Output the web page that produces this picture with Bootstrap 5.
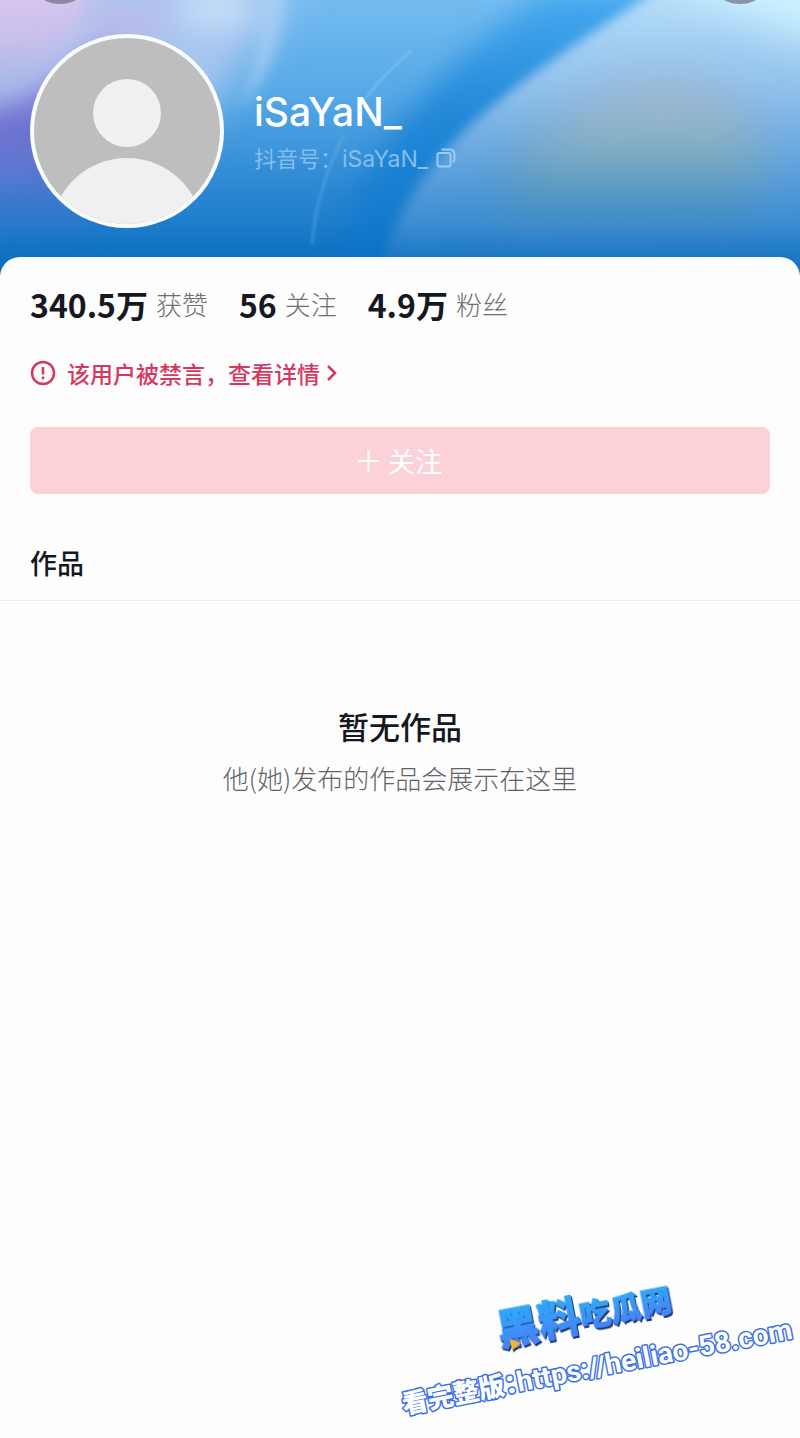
<!DOCTYPE html>
<html lang="zh-CN">
<head>
<meta charset="utf-8">
<meta name="viewport" content="width=device-width, initial-scale=1">
<title>iSaYaN_</title>
<link href="https://cdn.jsdelivr.net/npm/bootstrap@5.3.0/dist/css/bootstrap.min.css" rel="stylesheet">
<style>
  body { font-family: "Noto Sans CJK SC", sans-serif; background: #fdfdfd; color: #17181f; }
  .hero { height: 275px; padding: 34px 30px 0; background: #1678c8; }
  .hero-art { z-index: 0; }
  .hero-art filter { color-interpolation-filters: sRGB; }
  .top-actions { top: -64px; padding: 0 26px; z-index: 1; }
  .round-btn { width: 68px; height: 68px; background: rgba(110, 110, 130, .7); border: 0; }
  .profile { z-index: 1; gap: 30px; }
  .avatar { width: 194px; height: 194px; }
  .nickname { font: 500 39px/48px Inter, sans-serif; margin-top: 54px; }
  .account { font-size: 22px; line-height: 32px; color: #86bdec; margin-top: 5px; gap: 8px; }
  .account-id { font-family: Inter, "Noto Sans CJK SC", sans-serif; font-size: 23px; }
  .sheet { margin-top: -18px; border-radius: 20px 20px 0 0; background: #fdfdfd; z-index: 2; }
  .gutter { padding-left: 30px; padding-right: 30px; }
  .stats { padding-top: 27px; gap: 31px; line-height: 40px; }
  .stat { gap: 8px; }
  .stat-num { font-size: 32px; font-weight: 700; }
  .stat-label { font-size: 26px; font-weight: 300; color: #6e6f73; }
  .ban { margin-top: 33px; gap: 11px; font-size: 23px; line-height: 32px; font-weight: 500; color: #d5385f; }
  .ban:hover { color: #d5385f; }
  .ban-chevron { margin-left: -4px; }
  .follow { margin-top: 36px; height: 67px; border-radius: 8px; font-size: 27px; line-height: 32px; padding: 0; font-weight: 400; gap: 9px; }
  .follow, .follow:disabled { background: #fcd2d8; color: #fff; border: 0; opacity: 1; }
  .tab-title { margin-top: 48px; padding-bottom: 16px; font-size: 27px; line-height: 42px; font-weight: 500; border-bottom: 1px solid #ececee; }
  .empty { padding-top: 103px; }
  .empty-title { font-size: 31px; line-height: 44px; font-weight: 500; }
  .empty-text { font-size: 26px; line-height: 38px; font-weight: 300; color: #626367; margin-top: 11px; }
  .site-mark { width: 410px; height: 190px; }
  .mark-title { filter: drop-shadow(1px 2px 0 #16336e); }
</style>
</head>
<body>
<div class="d-flex flex-column min-vh-100">
  <header class="hero position-relative overflow-hidden">
    <svg class="hero-art position-absolute top-0 start-0 w-100 h-100" viewBox="0 0 800 275" preserveAspectRatio="none" aria-hidden="true">
      <defs>
        <linearGradient id="sky" x1="0" y1="0" x2="0" y2="1">
          <stop offset="0" stop-color="#74bcf0"/><stop offset=".35" stop-color="#55a8e6"/><stop offset=".7" stop-color="#2a86d2"/><stop offset="1" stop-color="#0a6fc0"/>
        </linearGradient>
        <linearGradient id="band" x1="0" y1="0" x2="0" y2="1">
          <stop offset="0" stop-color="#48aaf0"/><stop offset=".4" stop-color="#2288d8"/><stop offset="1" stop-color="#0870c4"/>
        </linearGradient>
        <linearGradient id="veil" x1="0" y1="0" x2="0" y2="1">
          <stop offset="0" stop-color="#bce2fb"/><stop offset=".35" stop-color="#90c0ec"/><stop offset=".68" stop-color="#4c96d8"/><stop offset="1" stop-color="#0f71c2"/>
        </linearGradient>
        <linearGradient id="sand" x1="0" y1="0" x2="0" y2="1">
          <stop offset="0" stop-color="#a9bcd6"/><stop offset=".4" stop-color="#86b0c4"/><stop offset=".7" stop-color="#4e94c0"/><stop offset="1" stop-color="#1b76bd" stop-opacity="0"/>
        </linearGradient>
        <linearGradient id="dusk" x1="0" y1="0" x2="0" y2="1">
          <stop offset="0" stop-color="#9a80da"/><stop offset=".5" stop-color="#6470ce"/><stop offset="1" stop-color="#2f70c8" stop-opacity="0"/>
        </linearGradient>
        <linearGradient id="bloom" x1="0" y1="0" x2="0" y2="1">
          <stop offset="0" stop-color="#ecd0f6"/><stop offset=".5" stop-color="#ccc0ec"/><stop offset="1" stop-color="#88b2e4"/>
        </linearGradient>
        <filter id="b1" x="-20%" y="-20%" width="140%" height="140%"><feGaussianBlur stdDeviation="1"/></filter>
        <filter id="b6" x="-50%" y="-50%" width="200%" height="200%"><feGaussianBlur stdDeviation="6"/></filter>
        <filter id="b14" x="-50%" y="-50%" width="200%" height="200%"><feGaussianBlur stdDeviation="14"/></filter>
        <filter id="b22" x="-60%" y="-60%" width="220%" height="220%"><feGaussianBlur stdDeviation="22"/></filter>
      </defs>
      <rect width="800" height="275" fill="url(#sky)"/>
      <path d="M-60-60H300C280 30 240 80 180 130L-60 170Z" fill="#a8c6f0" filter="url(#b22)"/>
      <path d="M-40 90L50 78 110 40 150 60 80 240-40 262Z" fill="url(#dusk)" filter="url(#b14)"/>
      <path d="M-60-60H110C95 20 60 70 25 98L-60 125Z" fill="url(#bloom)" filter="url(#b14)"/>
      <ellipse cx="125" cy="22" rx="50" ry="22" fill="#c4b8e6" opacity=".6" filter="url(#b14)"/>
      <ellipse cx="215" cy="8" rx="40" ry="24" fill="#c8e0f8" opacity=".8" filter="url(#b14)"/>
      <path d="M258-20H285C290 30 270 75 240 110 256 70 262 30 258-20Z" fill="#b8d6f6" opacity=".5" filter="url(#b6)"/>
      <path d="M720-10C560 50 480 140 440 300H340C338 240 355 180 405 120 440 75 490 30 550-10Z" fill="url(#band)" filter="url(#b14)"/>
      <path d="M670-20C600 30 505 85 450 145 410 190 385 230 376 300H840V-20Z" fill="url(#veil)" filter="url(#b6)"/>
      <path d="M485 235C490 175 545 115 610 88 680 62 745 80 765 150L750 250Z" fill="url(#sand)" filter="url(#b22)"/>
      <path d="M680-50H850V40C800 45 760 5 680-10Z" fill="#cdf3ff" filter="url(#b22)"/>
      <rect x="-20" y="250" width="840" height="50" fill="#0a6cbb" opacity=".6" filter="url(#b14)"/>
      <path d="M412 50Q382 76 366 98" fill="none" stroke="#8fc9f4" stroke-width="2" opacity=".6" filter="url(#b1)"/>
      <path d="M344 135Q316 190 312 245" fill="none" stroke="#7abaea" stroke-width="4" opacity=".25" filter="url(#b1)"/>
    </svg>
    <div class="top-actions position-absolute start-0 w-100 d-flex justify-content-between">
      <button type="button" class="round-btn rounded-circle p-0" aria-label="返回"></button>
      <button type="button" class="round-btn rounded-circle p-0" aria-label="更多"></button>
    </div>
    <div class="profile position-relative d-flex">
      <svg class="avatar flex-shrink-0" viewBox="0 0 194 194" role="img" aria-label="头像">
        <clipPath id="face"><circle cx="97" cy="97" r="93"/></clipPath>
        <circle cx="97" cy="97" r="97" fill="#fafdff"/>
        <g clip-path="url(#face)">
          <rect width="194" height="194" fill="#bebebe"/>
          <circle cx="97" cy="79" r="34" fill="#f0f0f0"/>
          <circle cx="97" cy="200" r="76" fill="#f0f0f0"/>
        </g>
      </svg>
      <div>
        <h1 class="nickname text-white mb-0">iSaYaN_</h1>
        <div class="account d-flex align-items-center">
          <span>抖音号：<span class="account-id">iSaYaN_</span></span>
          <button type="button" class="btn p-0 border-0 d-flex" aria-label="复制抖音号">
            <svg width="20" height="20" viewBox="0 0 20 20" fill="none" stroke="#9fcbf0" stroke-width="2"><rect x="1.500" y="5" width="13" height="13.500" rx="2"/><path d="M5.500 1.500H13.500Q18.500 1.500 18.500 6.500V10.500Q18.500 13 17 14.500"/></svg>
          </button>
        </div>
      </div>
    </div>
  </header>

  <main class="sheet position-relative">
    <div class="gutter">
      <div class="stats d-flex">
        <div class="stat d-flex"><span class="stat-num">340.5万</span><span class="stat-label">获赞</span></div>
        <div class="stat d-flex"><span class="stat-num">56</span><span class="stat-label">关注</span></div>
        <div class="stat d-flex"><span class="stat-num">4.9万</span><span class="stat-label">粉丝</span></div>
      </div>
      <a href="#" class="ban d-inline-flex align-items-center text-decoration-none">
        <svg width="26" height="26" viewBox="0 0 26 26" fill="none" stroke="currentColor" stroke-width="2.500"><circle cx="13" cy="13" r="11"/><path d="M13 7V14.500M13 16.500V19.200"/></svg>
        <span>该用户被禁言，查看详情</span>
        <svg class="ban-chevron" width="10" height="16" viewBox="0 0 10 16" fill="none" stroke="currentColor" stroke-width="2.500"><path d="M1 1L8 8 1 15"/></svg>
      </a>
      <button type="button" class="follow btn w-100 d-flex align-items-center justify-content-center" disabled>
        <svg width="21" height="22" viewBox="0 0 21 22" stroke="#fff" stroke-width="2"><path d="M10.500 0V22M0 11H21"/></svg>
        <span>关注</span>
      </button>
    </div>
    <h2 class="tab-title gutter mb-0">作品</h2>
    <section class="empty text-center">
      <h3 class="empty-title mb-0">暂无作品</h3>
      <p class="empty-text mb-0">他(她)发布的作品会展示在这里</p>
    </section>
  </main>

  <footer class="mt-auto d-flex justify-content-end">
    <svg class="site-mark" viewBox="0 -30 410 190" role="img" aria-label="黑料吃瓜网" font-family="'Noto Sans CJK SC', sans-serif" font-weight="900">
      <defs>
        <linearGradient id="ink" x1="0" y1="0" x2="0" y2="1"><stop offset="0" stop-color="#27b8f8"/><stop offset="1" stop-color="#4a78f8"/></linearGradient>
      </defs>
      <g class="mark-title" transform="translate(110 68) rotate(-11)">
        <g fill="url(#ink)" stroke="url(#ink)" stroke-width="1"><text font-size="42">黑料</text><text x="84" y="-2" font-size="31">吃瓜网</text></g>
        <path d="M11-5L21 1 11 7Z" fill="#f7b52c"/>
      </g>
      <g transform="translate(14 136) rotate(-11)" fill="#fff" stroke="#3b6fe6" stroke-width="3" stroke-linejoin="round" paint-order="stroke">
        <text font-size="26">看完整版：</text>
        <text x="117" font-size="28" font-family="Roboto, sans-serif" font-weight="700">https://heiliao-58.com</text>
      </g>
    </svg>
  </footer>
</div>
<script src="https://cdn.jsdelivr.net/npm/bootstrap@5.3.0/dist/js/bootstrap.bundle.min.js"></script>
</body>
</html>
